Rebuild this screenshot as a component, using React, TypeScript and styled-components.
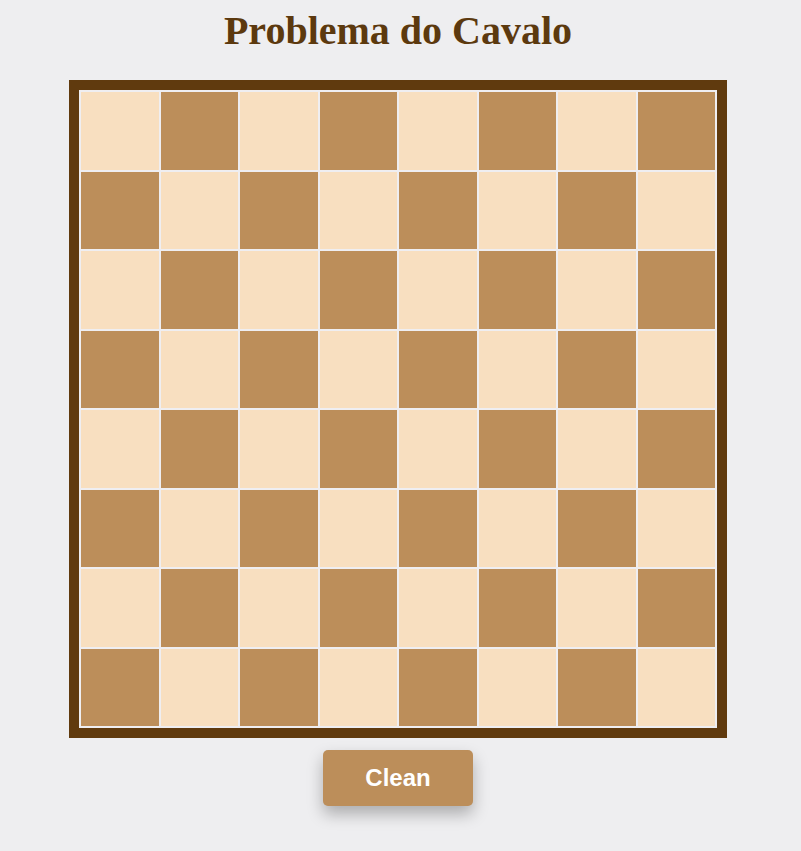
import React from "react";
import styled, { createGlobalStyle } from "styled-components";

const Global = createGlobalStyle`
  html, body {
    margin: 0;
    padding: 0;
    background: #eeeef0;
  }
`;

const Page = styled.div`
  display: flex;
  flex-direction: column;
  align-items: center;
  padding: 0 5px 40px 0;
`;

const Title = styled.h1`
  margin: 8px 0 26px;
  font-family: "Liberation Serif", "Times New Roman", serif;
  font-weight: bold;
  font-size: 40px;
  line-height: 46px;
  color: #5c390e;
`;

const Board = styled.div`
  box-sizing: border-box;
  width: 658px;
  height: 658px;
  padding: 1px;
  border: 10px solid #603a0e;
  background: #efeef1;
  display: grid;
  grid-template-columns: repeat(8, 1fr);
  grid-template-rows: repeat(8, 1fr);
`;

const Cell = styled.div<{ $dark: boolean }>`
  margin: 1px;
  background: ${(p) => (p.$dark ? "#bc8e5a" : "#f8dfc0")};
`;

const CleanButton = styled.button`
  margin-top: 12px;
  width: 150px;
  height: 56px;
  border: none;
  border-radius: 5px;
  background: #bc8e5a;
  color: #ffffff;
  font-family: "Liberation Sans", Arial, sans-serif;
  font-weight: bold;
  font-size: 24px;
  box-shadow: 0 8px 16px rgba(0, 0, 0, 0.28);
  cursor: pointer;
`;

export default function App() {
  const cells = [];
  for (let r = 0; r < 8; r++) {
    for (let c = 0; c < 8; c++) {
      cells.push(<Cell key={`${r}-${c}`} $dark={(r + c) % 2 === 1} />);
    }
  }
  return (
    <>
      <Global />
      <Page>
        <Title>Problema do Cavalo</Title>
        <Board>{cells}</Board>
        <CleanButton>Clean</CleanButton>
      </Page>
    </>
  );
}
